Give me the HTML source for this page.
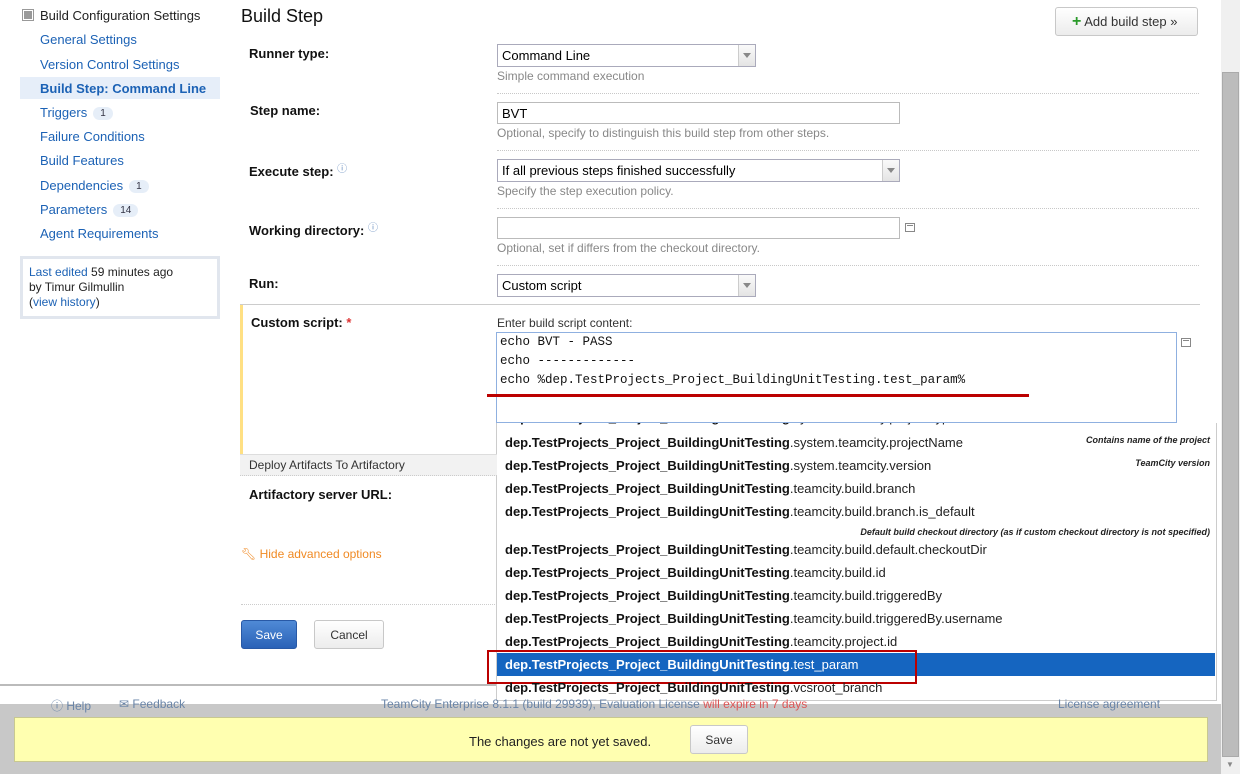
<!DOCTYPE html>
<html><head><meta charset="utf-8"><style>
*{margin:0;padding:0;box-sizing:border-box}
body{width:1240px;height:774px;position:relative;overflow:hidden;background:#fff;font-family:"Liberation Sans",Arial,sans-serif;font-size:13px;color:#000}
.a{position:absolute;white-space:nowrap}
.nav{color:#1c62b5;font-size:13px;left:40px}
.badge{display:inline-block;background:#e6eef8;border-radius:8px;font-size:10px;color:#334;padding:1px 7px;margin-left:6px;vertical-align:1px}
.lbl{font-weight:bold;font-size:13px;color:#111}
.note{color:#888;font-size:12px}
.inp{position:absolute;border:1px solid #bbb;background:#fff;height:22px;font-size:13px;padding:3px 4px}
.sel{position:absolute;border:1px solid #aab;background:#fff;height:23px;font-size:13px;padding:3px 4px}
.sel .arr{position:absolute;right:0;top:0;width:17px;height:21px;border-left:1px solid #ccc;background:linear-gradient(#fafafa,#e4e4e4)}
.sel .arr:after{content:"";position:absolute;left:4px;top:8px;border:4px solid transparent;border-top:5px solid #888}
.dot{position:absolute;height:0;border-top:1px dotted #c8c8c8;left:497px;width:702px}
.it{position:absolute;left:505px;font-size:13px;color:#222;white-space:nowrap}
.it b{color:#111}
.desc{position:absolute;right:30px;font-size:9px;font-style:italic;font-weight:bold;color:#222;white-space:nowrap}
.ico{position:absolute;width:10px;height:9px;border:1px solid #888}
.ico:before{content:"";position:absolute;left:1px;right:1px;top:1px;height:5px;border-top:1px solid #888;border-bottom:1px solid #888}
</style></head><body>
<div class="a" style="left:22px;top:9px;width:12px;height:12px;border:1px solid #999;background:#fff"><div style="margin:1px;width:8px;height:8px;background:#999"></div></div>
<div class="a" style="left:40px;top:8px;font-size:13px;color:#222">Build Configuration Settings</div>
<div class="a nav" style="top:32px">General Settings</div>
<div class="a nav" style="top:57px">Version Control Settings</div>
<div class="a" style="left:20px;top:77px;width:200px;height:22px;background:#e6eef9"></div>
<div class="a nav" style="top:81px;font-weight:bold">Build Step: Command Line</div>
<div class="a nav" style="top:105px">Triggers<span class="badge">1</span></div>
<div class="a nav" style="top:129px">Failure Conditions</div>
<div class="a nav" style="top:153px">Build Features</div>
<div class="a nav" style="top:178px">Dependencies<span class="badge">1</span></div>
<div class="a nav" style="top:202px">Parameters<span class="badge">14</span></div>
<div class="a nav" style="top:226px">Agent Requirements</div>
<div class="a" style="left:20px;top:256px;width:200px;height:63px;border:3px solid #e1e6ee;background:#fff;padding:6px 6px;font-size:12px;line-height:15px;color:#222;white-space:normal">
<span style="color:#1c62b5">Last edited</span> 59 minutes ago<br>by Timur Gilmullin<br>(<span style="color:#1c62b5">view history</span>)</div>

<div class="a" style="left:241px;top:6px;font-size:18px;color:#111">Build Step</div>
<div class="a" style="left:1055px;top:7px;width:143px;height:29px;border:1px solid #c8c8c8;border-radius:3px;background:linear-gradient(#fff,#ececec);font-size:13px;color:#333;padding:6px 0 0 16px"><span style="color:#2a9a2a;font-weight:bold;font-size:16px;line-height:10px">+</span> Add build step »</div>

<div class="a lbl" style="left:249px;top:46px">Runner type:</div>
<div class="sel" style="left:497px;top:44px;width:259px">Command Line<div class="arr"></div></div>
<div class="a note" style="left:497px;top:69px">Simple command execution</div>
<div class="dot" style="top:93px"></div>

<div class="a lbl" style="left:250px;top:103px">Step name:</div>
<div class="inp" style="left:497px;top:102px;width:403px">BVT</div>
<div class="a note" style="left:497px;top:126px">Optional, specify to distinguish this build step from other steps.</div>
<div class="dot" style="top:150px"></div>

<div class="a lbl" style="left:249px;top:160px">Execute step: <span style="font-weight:normal;color:#6a8fc0;font-size:10px;vertical-align:4px">&#9432;</span></div>
<div class="sel" style="left:497px;top:159px;width:403px">If all previous steps finished successfully<div class="arr"></div></div>
<div class="a note" style="left:497px;top:184px">Specify the step execution policy.</div>
<div class="dot" style="top:208px"></div>

<div class="a lbl" style="left:249px;top:219px">Working directory: <span style="font-weight:normal;color:#6a8fc0;font-size:10px;vertical-align:4px">&#9432;</span></div>
<div class="inp" style="left:497px;top:217px;width:403px"></div>
<div class="ico" style="left:905px;top:223px"></div>
<div class="a note" style="left:497px;top:241px">Optional, set if differs from the checkout directory.</div>
<div class="dot" style="top:265px"></div>

<div class="a lbl" style="left:249px;top:276px">Run:</div>
<div class="sel" style="left:497px;top:274px;width:259px">Custom script<div class="arr"></div></div>

<div class="a" style="left:240px;top:304px;width:960px;border-top:1px solid #ccc"></div>
<div class="a" style="left:240px;top:305px;width:3px;height:149px;background:#ffe083"></div>
<div class="a lbl" style="left:251px;top:315px">Custom script: <span style="color:#d33">*</span></div>
<div class="a" style="left:497px;top:316px;font-size:12px;color:#333">Enter build script content:</div>

<!-- dropdown list -->
<div class="a" style="left:496px;top:423px;width:721px;height:278px;background:#fff;border:1px solid #ccc;border-top:none;overflow:hidden"></div>
<div class="it" style="top:410px"><b>dep.TestProjects_Project_BuildingUnitTesting</b>.system.teamcity.projectType</div>

<div class="a" style="left:496px;top:332px;width:681px;height:91px;border:1px solid #8fb0e0;background:#fff;font-family:'Liberation Mono',monospace;font-size:12.5px;line-height:19px;padding:0 3px;color:#111">echo BVT - PASS<br>echo -------------<br>echo %dep.TestProjects_Project_BuildingUnitTesting.test_param%</div>
<div class="a" style="left:487px;top:394px;width:542px;height:3px;background:#b00"></div>
<div class="ico" style="left:1181px;top:338px"></div>

<div class="a" style="left:240px;top:454px;width:257px;height:22px;background:#f2f2f2;border-top:1px solid #ddd;border-bottom:1px dotted #ccc"></div>
<div class="a" style="left:249px;top:458px;font-size:12px;color:#333">Deploy Artifacts To Artifactory</div>
<div class="a lbl" style="left:249px;top:487px">Artifactory server URL:</div>
<div class="a" style="left:241px;top:547px;font-size:12px;color:#f08a24">&#x1F527;&#xFE0E; Hide advanced options</div>
<div class="a" style="left:241px;top:604px;width:256px;border-top:1px dotted #ccc"></div>
<div class="a" style="left:241px;top:620px;width:56px;height:29px;background:linear-gradient(#4f8ad6,#2a62b7);border:1px solid #2859a6;border-radius:3px;color:#fff;font-size:12px;text-align:center;padding-top:7px">Save</div>
<div class="a" style="left:314px;top:620px;width:70px;height:29px;background:linear-gradient(#fff,#ececec);border:1px solid #c8c8c8;border-radius:3px;color:#333;font-size:12px;text-align:center;padding-top:7px">Cancel</div>

<div class="it" style="top:435px"><b>dep.TestProjects_Project_BuildingUnitTesting</b>.system.teamcity.projectName</div>
<div class="desc" style="top:435px">Contains name of the project</div>
<div class="it" style="top:458px"><b>dep.TestProjects_Project_BuildingUnitTesting</b>.system.teamcity.version</div>
<div class="desc" style="top:458px">TeamCity version</div>
<div class="it" style="top:481px"><b>dep.TestProjects_Project_BuildingUnitTesting</b>.teamcity.build.branch</div>
<div class="it" style="top:504px"><b>dep.TestProjects_Project_BuildingUnitTesting</b>.teamcity.build.branch.is_default</div>
<div class="desc" style="top:527px">Default build checkout directory (as if custom checkout directory is not specified)</div>
<div class="it" style="top:542px"><b>dep.TestProjects_Project_BuildingUnitTesting</b>.teamcity.build.default.checkoutDir</div>
<div class="it" style="top:565px"><b>dep.TestProjects_Project_BuildingUnitTesting</b>.teamcity.build.id</div>
<div class="it" style="top:588px"><b>dep.TestProjects_Project_BuildingUnitTesting</b>.teamcity.build.triggeredBy</div>
<div class="it" style="top:611px"><b>dep.TestProjects_Project_BuildingUnitTesting</b>.teamcity.build.triggeredBy.username</div>
<div class="it" style="top:634px"><b>dep.TestProjects_Project_BuildingUnitTesting</b>.teamcity.project.id</div>
<div class="a" style="left:497px;top:653px;width:718px;height:23px;background:#1565c0"></div>
<div class="it" style="top:657px;color:#fff"><b style="color:#fff">dep.TestProjects_Project_BuildingUnitTesting</b>.test_param</div>
<div class="a" style="left:487px;top:650px;width:430px;height:34px;border:2px solid #b00"></div>
<div class="it" style="top:680px"><b>dep.TestProjects_Project_BuildingUnitTesting</b>.vcsroot_branch</div>

<div class="a" style="left:0;top:684px;width:496px;border-top:2px solid #bbb"></div>
<div class="a" style="left:0;top:704px;width:1221px;height:70px;background:#c8c8c8"></div>
<div class="a" style="left:51px;top:697px;font-size:12px;color:#6a85a8">&#9432; Help</div>
<div class="a" style="left:119px;top:697px;font-size:12px;color:#6a85a8">&#9993; Feedback</div>
<div class="a" style="left:381px;top:697px;font-size:12px;color:#6a85a8">TeamCity Enterprise 8.1.1 (build 29939), Evaluation License <span style="color:#d55">will expire in 7 days</span></div>
<div class="a" style="left:1058px;top:697px;font-size:12px;color:#6a85a8">License agreement</div>
<div class="a" style="left:565px;top:716px;font-size:12px;color:#bbb">&#9432; Get new version!</div>
<div class="a" style="left:14px;top:717px;width:1194px;height:45px;background:#ffffb0;border:1px solid #c8c890"></div>
<div class="a" style="left:469px;top:734px;font-size:13px;color:#222">The changes are not yet saved.</div>
<div class="a" style="left:690px;top:725px;width:58px;height:29px;background:linear-gradient(#fff,#ececec);border:1px solid #c8c8c8;border-radius:3px;color:#333;font-size:12px;text-align:center;padding-top:7px">Save</div>

<div class="a" style="left:1221px;top:0;width:19px;height:774px;background:#f0f0f0"></div>
<div class="a" style="left:1222px;top:72px;width:17px;height:685px;background:#bcbcbc;border:1px solid #aaa"></div>
<div class="a" style="left:1226px;top:760px;font-size:8px;color:#888">&#9660;</div>
</body></html>
